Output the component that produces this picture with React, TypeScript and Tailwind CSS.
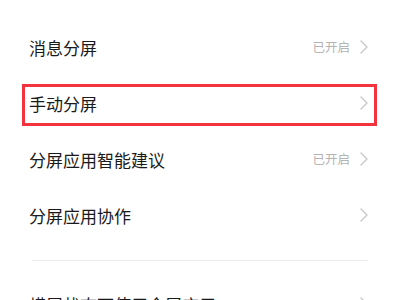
import React from 'react';

interface Row {
  label: string;
  status?: string;
}

const topRows: Row[] = [
  { label: '消息分屏', status: '已开启' },
  { label: '手动分屏' },
  { label: '分屏应用智能建议', status: '已开启' },
  { label: '分屏应用协作' },
];

function Chevron() {
  return (
    <svg width="8" height="14" viewBox="0 0 8 14" className="shrink-0">
      <polyline
        points="1,1 7,7 1,13"
        fill="none"
        stroke="#c6c6c6"
        strokeWidth="1.3"
        strokeLinecap="round"
        strokeLinejoin="round"
      />
    </svg>
  );
}

function SettingRow({ label, status }: Row) {
  return (
    <div className="flex items-center h-[56px] pl-[29px] pr-[32px]">
      <span className="flex-1 text-[17px] text-[#1a1a1a] leading-none">{label}</span>
      {status && (
        <span className="text-[12.5px] text-[#b3b3b3] mr-[10px] leading-none">{status}</span>
      )}
      <Chevron />
    </div>
  );
}

export default function App() {
  return (
    <div
      className="relative w-[400px] h-[300px] overflow-hidden bg-white"
      style={{ fontFamily: '"Noto Sans CJK SC", "Noto Sans", sans-serif' }}
    >
      <div className="pt-[19px]">
        {topRows.map((r) => (
          <SettingRow key={r.label} {...r} />
        ))}
      </div>
      <div className="mx-[32px] mt-[17px] h-px bg-[#ececec]" />
      <div className="mt-[15px]">
        <SettingRow label="横屏状态下使用全屏应用" />
      </div>

      {/* highlight annotation */}
      <div className="absolute left-[22px] top-[84px] w-[355px] h-[42px] border-[3px] border-[#f5333f] pointer-events-none" />
    </div>
  );
}
